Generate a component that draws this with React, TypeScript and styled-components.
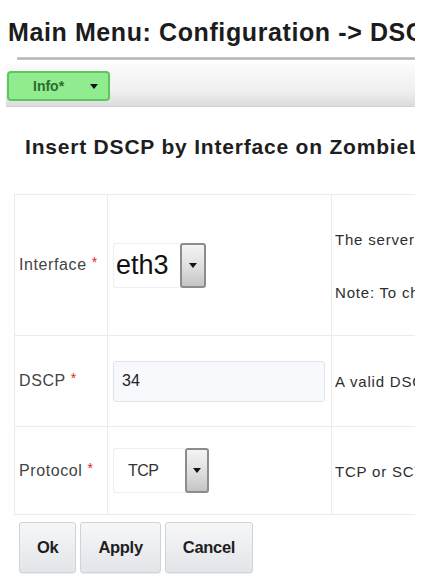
import React from 'react'
import styled, { createGlobalStyle } from 'styled-components'

const GlobalStyle = createGlobalStyle`
  html, body {
    margin: 0;
    padding: 0;
    background: #ffffff;
  }
  body {
    font-family: 'Liberation Sans', Arial, Helvetica, sans-serif;
    color: #222;
  }
`

type Row = {
  label: string
  height: number
  field: React.ReactNode
  notes: string[]
}

function Select({
  value,
  $big,
  $boxWidth,
  $buttonWidth,
}: {
  value: string
  $big?: boolean
  $boxWidth: number
  $buttonWidth: number
}) {
  return (
    <_Select>
      <_SelectValue $big={$big} $w={$boxWidth}>
        {value}
      </_SelectValue>
      <_SelectButton $w={$buttonWidth}>
        <_Caret />
      </_SelectButton>
    </_Select>
  )
}

const rows: Row[] = [
  {
    label: 'Interface',
    height: 141,
    field: <Select value="eth3" $big $boxWidth={67} $buttonWidth={26} />,
    notes: ['The server interface to match traffic on', 'Note: To change the interface list'],
  },
  {
    label: 'DSCP',
    height: 91,
    field: null,
    notes: ['A valid DSCP value between 0 and 63'],
  },
  {
    label: 'Protocol',
    height: 88,
    field: <Select value="TCP" $boxWidth={72} $buttonWidth={24} />,
    notes: ['TCP or SCTP protocol'],
  },
]

const App: React.FC = () => {
  return (
    <>
      <GlobalStyle />
      <_Page>
        <_Title>Main Menu: Configuration -&gt; DSCP</_Title>
        <_Rule />
        <_Toolbar>
          <_InfoButton>
            <span>Info*</span>
            <_Caret />
          </_InfoButton>
        </_Toolbar>
        <_SubTitle>Insert DSCP by Interface on ZombieLand</_SubTitle>
        <_FormTable>
          <tbody>
            {rows.map((row) => (
              <tr key={row.label}>
                <_LabelCell $h={row.height}>
                  {row.label}
                  <_Required>*</_Required>
                </_LabelCell>
                <_FieldCell>
                  {row.field ?? <_TextInput defaultValue="34" readOnly />}
                </_FieldCell>
                <_NoteCell>
                  <_Notes>
                    {row.notes.map((note) => (
                      <span key={note}>{note}</span>
                    ))}
                  </_Notes>
                </_NoteCell>
              </tr>
            ))}
          </tbody>
        </_FormTable>
        <_Actions>
          <_ActionButton>Ok</_ActionButton>
          <_ActionButton>Apply</_ActionButton>
          <_ActionButton>Cancel</_ActionButton>
        </_Actions>
      </_Page>
    </>
  )
}

const _Page = styled.div`
  width: 415px;
  overflow: hidden;
  padding-top: 15px;
  padding-bottom: 9px;
`

const _Title = styled.h1`
  margin: 0;
  padding-left: 8px;
  font-size: 25px;
  line-height: 34px;
  font-weight: bold;
  letter-spacing: 0.6px;
  white-space: nowrap;
  color: #1c1c1c;
`

const _Rule = styled.div`
  margin: 8px 0 0 17px;
  height: 3px;
  background: linear-gradient(#d4d4d4, #b4b4b4, #d0d0d0);
`

const _Toolbar = styled.div`
  display: flex;
  align-items: flex-start;
  margin: 4px 0 0 6px;
  padding: 7px 0 0 1px;
  height: 35px;
  background: linear-gradient(#fbfbfb, #efefef 65%, #dcdcdc);
  border-bottom: 1px solid #d2d2d2;
`

const _InfoButton = styled.div`
  box-sizing: border-box;
  display: flex;
  align-items: center;
  justify-content: space-between;
  width: 103px;
  height: 30px;
  padding: 0 10px 0 24px;
  background: #8fec8f;
  border: 2px solid #5cc75c;
  border-radius: 4px;
  font-size: 14px;
  font-weight: bold;
  color: #2d6b2d;
`

const _Caret = styled.span`
  width: 0;
  height: 0;
  border-left: 4px solid transparent;
  border-right: 4px solid transparent;
  border-top: 5px solid #111;
`

const _SubTitle = styled.h2`
  margin: 27px 0 0;
  padding-left: 25px;
  font-size: 21px;
  line-height: 26px;
  font-weight: bold;
  letter-spacing: 0.8px;
  white-space: nowrap;
  color: #1e1e1e;
`

const _FormTable = styled.table`
  margin: 34px 0 0 14px;
  width: 600px;
  border-collapse: collapse;
  table-layout: fixed;

  td {
    border: 1px solid #ebebeb;
    vertical-align: middle;
    padding: 0;
  }
`

const _LabelCell = styled.td<{ $h: number }>`
  box-sizing: border-box;
  width: 93px;
  height: ${(p) => p.$h}px;
  padding-left: 4px !important;
  font-size: 16px;
  letter-spacing: 0.6px;
  color: #444;
  white-space: nowrap;
`

const _Required = styled.span`
  margin-left: 5px;
  color: #e8202a;
  font-size: 14px;
  position: relative;
  top: -3px;
`

const _FieldCell = styled.td`
  box-sizing: border-box;
  width: 224px;
  padding-left: 5px !important;
`

const _NoteCell = styled.td`
  padding-left: 3px !important;
  white-space: nowrap;
  overflow: hidden;
  font-size: 15px;
  letter-spacing: 0.8px;
  color: #2e2e2e;
`

const _Notes = styled.div`
  display: flex;
  flex-direction: column;
  gap: 35px;
  line-height: 18px;
  position: relative;
  top: 1px;
`

const _Select = styled.div`
  display: inline-flex;
  align-items: stretch;
  height: 45px;
`

const _SelectValue = styled.div<{ $big?: boolean; $w: number }>`
  box-sizing: border-box;
  display: flex;
  align-items: center;
  width: ${(p) => p.$w}px;
  padding-left: ${(p) => (p.$big ? 2 : 14)}px;
  border: 1px solid #eceef3;
  border-right: none;
  border-radius: 3px 0 0 3px;
  background: #fff;
  font-size: ${(p) => (p.$big ? 27 : 16)}px;
  letter-spacing: ${(p) => (p.$big ? 0 : -0.6)}px;
  color: ${(p) => (p.$big ? '#111' : '#333')};
`

const _SelectButton = styled.div<{ $w: number }>`
  box-sizing: border-box;
  display: flex;
  align-items: center;
  justify-content: center;
  width: ${(p) => p.$w}px;
  border: 2px solid #8c8c8c;
  border-radius: 3px;
  background: linear-gradient(#f4f4f4, #dcdcdc 60%, #c4c4c4);
`

const _TextInput = styled.input`
  box-sizing: border-box;
  display: block;
  width: 212px;
  height: 41px;
  padding: 0 0 0 8px;
  border: 1px solid #dfe3ea;
  border-radius: 3px;
  background: #f8f9fc;
  font-family: 'Liberation Sans', Arial, sans-serif;
  font-size: 16px;
  color: #222;
  outline: none;
`

const _Actions = styled.div`
  display: flex;
  gap: 4px;
  margin: 7px 0 0 19px;
`

const _ActionButton = styled.button`
  height: 51px;
  padding: 0 17px;
  border: 1px solid #cfd4da;
  border-radius: 3px;
  background: linear-gradient(#f6f7f9, #e2e5e9);
  box-shadow: 0 1px 1px rgba(0, 0, 0, 0.08);
  font-family: 'Liberation Sans', Arial, sans-serif;
  font-size: 16.5px;
  font-weight: bold;
  letter-spacing: -0.3px;
  color: #1e1e1e;
`

export default App
